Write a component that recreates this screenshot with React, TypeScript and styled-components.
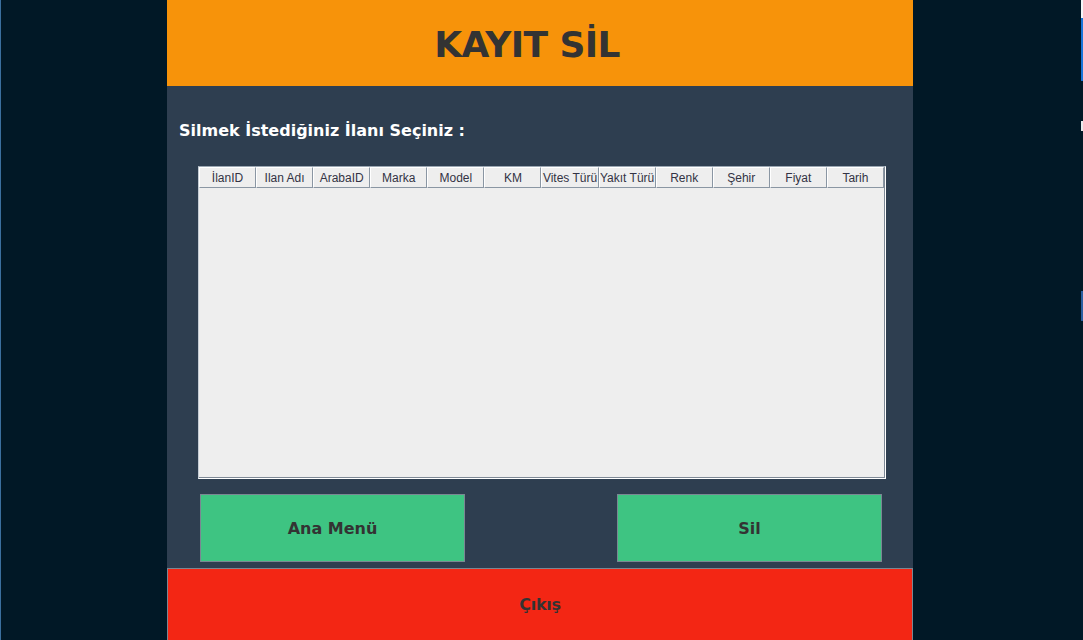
import React from "react";
import styled, { createGlobalStyle } from "styled-components";

const Global = createGlobalStyle`
  html, body { margin: 0; padding: 0; background: #011826; }
  body { width: 1083px; height: 640px; overflow: hidden; }
  * { box-sizing: border-box; }
`;

const Screen = styled.div`
  display: flex;
  width: 1083px;
  height: 640px;
  background: #011826;
  border-left: 1px solid #3b6f9e;
`;

const Side = styled.div<{ $w: number }>`
  width: ${(p) => p.$w}px;
  flex: none;
  display: flex;
  justify-content: flex-end;
`;

const Stripe = styled.div`
  width: 2px;
  display: flex;
  flex-direction: column;
`;

const StripeBit = styled.div<{ $h: number; $c: string }>`
  height: ${(p) => p.$h}px;
  background: ${(p) => p.$c};
`;

const Frame = styled.div`
  width: 746px;
  flex: none;
  display: flex;
  flex-direction: column;
  background: #2e3e50;
  font-family: "DejaVu Sans", Verdana, sans-serif;
`;

const Header = styled.div`
  height: 86px;
  background: #f7930a;
  display: flex;
  align-items: center;
  justify-content: center;
  padding-right: 26px;
`;

const Title = styled.h1`
  margin: 2px 0 0 0;
  font-size: 36px;
  font-weight: bold;
  color: #333333;
  letter-spacing: -0.6px;
`;

const Body = styled.div`
  flex: 1;
  display: flex;
  flex-direction: column;
  padding: 0 27px 0 31px;
`;

const Prompt = styled.div`
  margin: 33px 0 0 -19px;
  height: 24px;
  line-height: 24px;
  font-size: 16px;
  font-weight: bold;
  color: #ffffff;
  letter-spacing: 0;
`;

const TablePane = styled.div`
  margin-top: 23px;
  height: 313px;
  display: flex;
  flex-direction: column;
  background: #eeeeee;
  border-top: 1px solid #9aa6b2;
  border-left: 1px solid #c4ccd4;
  border-right: 1px solid #ffffff;
  border-bottom: 1px solid #ffffff;
`;

const TableInner = styled.div`
  flex: 1;
  display: flex;
  flex-direction: column;
  border-right: 1px solid #7d8895;
  border-bottom: 1px solid #7d8895;
`;

const HeadRow = styled.div`
  display: grid;
  grid-template-columns: repeat(12, 1fr);
  height: 21px;
  background: #eeeeee;
`;

const HeadCell = styled.div`
  display: flex;
  align-items: center;
  justify-content: center;
  font-family: "Liberation Sans", Arial, sans-serif;
  font-size: 12px;
  color: #333344;
  white-space: nowrap;
  overflow: hidden;
  border-top: 1px solid #ffffff;
  border-right: 1px solid #8a96a3;
  border-bottom: 1px solid #8a96a3;
  border-left: 1px solid #ffffff;
`;

const TableBody = styled.div`
  flex: 1;
  background: #eeeeee;
`;

const ButtonRow = styled.div`
  display: flex;
  justify-content: space-between;
  margin-top: 15px;
  padding: 0 4px 0 2px;
`;

const ActionButton = styled.button`
  width: 265px;
  height: 68px;
  background: #3ec482;
  border: 1px solid #7a8793;
  font-family: "DejaVu Sans", Verdana, sans-serif;
  font-size: 16px;
  font-weight: bold;
  color: #333333;
  letter-spacing: 0;
  padding: 0;
`;

const ExitButton = styled.button`
  margin-top: 6px;
  height: 72px;
  width: 100%;
  background: #f32614;
  border: 1px solid #7a8793;
  border-bottom: none;
  font-family: "DejaVu Sans", Verdana, sans-serif;
  font-size: 16px;
  font-weight: bold;
  color: #333333;
  letter-spacing: -0.3px;
  padding: 0;
`;

const columns = [
  "İlanID",
  "Ilan Adı",
  "ArabaID",
  "Marka",
  "Model",
  "KM",
  "Vites Türü",
  "Yakıt Türü",
  "Renk",
  "Şehir",
  "Fiyat",
  "Tarih",
];

export default function App() {
  return (
    <>
      <Global />
      <Screen>
        <Side $w={166} />
        <Frame>
          <Header>
            <Title>KAYIT SİL</Title>
          </Header>
          <Body>
            <Prompt>Silmek İstediğiniz İlanı Seçiniz :</Prompt>
            <TablePane>
              <TableInner>
                <HeadRow>
                  {columns.map((c) => (
                    <HeadCell key={c}>{c}</HeadCell>
                  ))}
                </HeadRow>
                <TableBody />
              </TableInner>
            </TablePane>
            <ButtonRow>
              <ActionButton>Ana Menü</ActionButton>
              <ActionButton>Sil</ActionButton>
            </ButtonRow>
          </Body>
          <ExitButton>Çıkış</ExitButton>
        </Frame>
        <Side $w={170}>
          <Stripe>
            <StripeBit $h={18} $c="#f4f6f8" />
            <StripeBit $h={63} $c="#1976d8" />
            <StripeBit $h={40} $c="#011826" />
            <StripeBit $h={10} $c="#e8eaec" />
            <StripeBit $h={160} $c="#011826" />
            <StripeBit $h={30} $c="#2a5fa0" />
          </Stripe>
        </Side>
      </Screen>
    </>
  );
}
